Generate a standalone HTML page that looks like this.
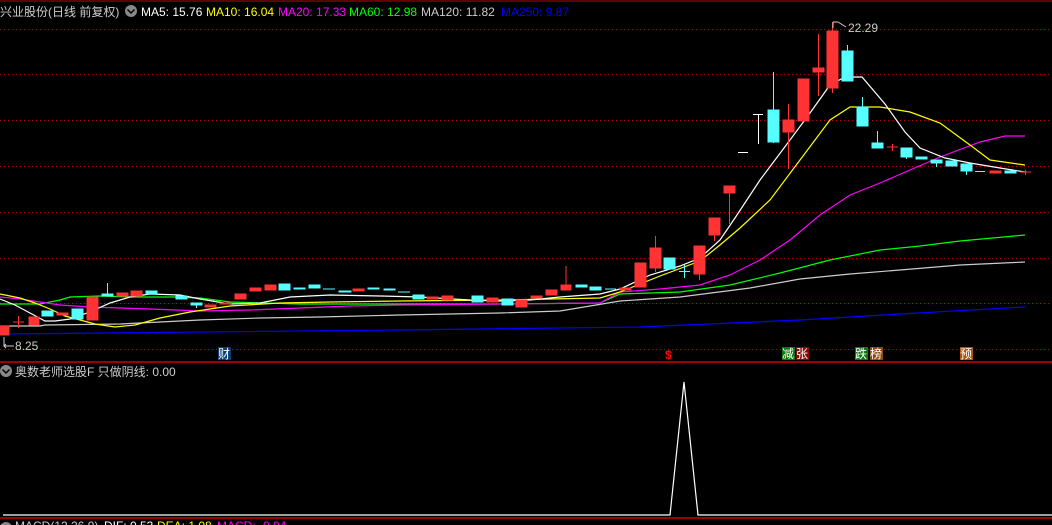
<!DOCTYPE html>
<html><head><meta charset="utf-8"><style>
body{margin:0;background:#000;width:1052px;height:525px;overflow:hidden;font-family:"Liberation Sans","Noto Sans CJK SC",sans-serif}
svg{position:absolute;left:0;top:0}
text{font-family:"Liberation Sans","Noto Sans CJK SC",sans-serif;font-size:12px}
</style></head><body>
<svg width="1052" height="525" viewBox="0 0 1052 525">
<line x1="0" y1="1" x2="1052" y2="1" stroke="#b00" stroke-width="1"/>
<g stroke="#b00" stroke-dasharray="1,3" stroke-width="1">
<line x1="0" y1="29.5" x2="1052" y2="29.5"/><line x1="0" y1="74.5" x2="1052" y2="74.5"/>
<line x1="0" y1="120.5" x2="1052" y2="120.5"/><line x1="0" y1="166.5" x2="1052" y2="166.5"/>
<line x1="0" y1="212.5" x2="1052" y2="212.5"/><line x1="0" y1="258.5" x2="1052" y2="258.5"/>
<line x1="0" y1="303.5" x2="1052" y2="303.5"/><line x1="0" y1="349.5" x2="1052" y2="349.5"/>
</g>
<line x1="0" y1="362" x2="1052" y2="362" stroke="#c00" stroke-width="1.5"/>
<line x1="0" y1="518" x2="1052" y2="518" stroke="#c00" stroke-width="1.5"/>
<g fill="none" stroke-width="1.2">
<polyline stroke="#00f" points="0,334 200,332 400,330 640,327 800,320 900,314 1025,307"/>
<polyline stroke="#ccc" points="0,326 40,326 45,325 120,324 160,322 200,320 260,318 320,317 400,315 500,313 560,311 620,301 680,297 750,288 800,279 850,274 900,270 960,265 1025,262"/>
<polyline stroke="#0f0" points="0,304 40,304 60,300 70,297 100,296 130,297 175,297 200,298 230,302 300,304 400,304 500,304 600,303 620,294 680,292 730,285 780,273 830,260 880,250 920,246 960,241 1025,235"/>
<polyline stroke="#f0f" points="0,297 20,299 40,302 60,305 90,307 150,309 200,311 250,310 300,308 350,306 400,305 500,304 600,303 620,292 660,289 700,285 730,275 760,260 790,240 820,215 850,195 880,183 910,170 940,157 980,142 1005,136 1025,136"/>
<polyline stroke="#ff0" points="0,294 20,298 35,303 50,309 65,316 80,320 95,324 115,327 135,325 160,318 190,312 230,306 280,303 330,302 400,301 500,300 600,298 620,292 660,276 700,261 720,245 740,228 770,200 800,160 830,120 850,107 880,107 910,112 940,123 970,145 990,160 1025,165"/>
<polyline stroke="#fff" points="0,299 15,305 30,313 45,321 55,321 70,319 90,312 110,303 130,297 150,294 180,295 200,299 230,304 260,303 290,297 330,295 380,296 420,297 470,300 500,301 530,300 560,297 600,294 620,289 650,275 680,266 700,258 720,240 735,218 760,180 775,160 790,140 810,113 830,85 845,77 862,77 885,104 905,132 920,148 945,158 970,163 1000,168 1025,172"/>
</g>
<g fill="#ff3333" stroke="#ff3333">
<rect x="0" y="326" width="9" height="9"/><line x1="13" y1="322" x2="24" y2="322"/><line x1="18.5" y1="316" x2="18.5" y2="328"/>
<rect x="29" y="317" width="10" height="8"/><rect x="57" y="313" width="11" height="2"/><rect x="87" y="297" width="11" height="23"/>
<rect x="117" y="293" width="11" height="3"/><rect x="131" y="291" width="11" height="5"/><rect x="205" y="305" width="11" height="2"/>
<rect x="220" y="303" width="11" height="1"/><rect x="235" y="294" width="11" height="5"/><rect x="250" y="288" width="11" height="3"/>
<rect x="265" y="285" width="11" height="5"/><rect x="353" y="289" width="11" height="2"/><rect x="427" y="297" width="11" height="2"/>
<rect x="442" y="296" width="11" height="4"/><rect x="487" y="298" width="11" height="4"/><rect x="516" y="300" width="11" height="7"/>
<rect x="531" y="296" width="11" height="2"/><rect x="546" y="290" width="11" height="5"/><rect x="561" y="285" width="10" height="5"/><line x1="566" y1="266" x2="566" y2="285"/>
<rect x="620" y="288" width="11" height="2"/>
<rect x="635" y="263" width="11" height="24"/><rect x="650" y="248" width="11" height="20"/><line x1="655.5" y1="236" x2="655.5" y2="272"/>
<rect x="694" y="246" width="11" height="28"/><line x1="699.5" y1="274" x2="699.5" y2="280"/>
<rect x="709" y="218" width="11" height="17"/><line x1="714.5" y1="235" x2="714.5" y2="241"/>
<rect x="724" y="186" width="11" height="7"/><line x1="729.5" y1="193" x2="729.5" y2="224"/>
<rect x="783" y="120" width="11" height="12"/><line x1="788.5" y1="104" x2="788.5" y2="169"/>
<rect x="798" y="79" width="11" height="42"/>
<rect x="813" y="68" width="11" height="4"/><line x1="818.5" y1="34" x2="818.5" y2="96"/>
<rect x="827" y="31" width="11" height="57"/><line x1="832.5" y1="22" x2="832.5" y2="93"/>
<line x1="887" y1="147" x2="898" y2="147"/><line x1="892.5" y1="144" x2="892.5" y2="151"/>
<rect x="990" y="171" width="11" height="2"/><line x1="1020" y1="172" x2="1031" y2="172"/><line x1="1025.5" y1="170" x2="1025.5" y2="175"/>
</g>
<g fill="#55ffff" stroke="#55ffff">
<rect x="42" y="311" width="11" height="5"/><rect x="72" y="309" width="11" height="10"/>
<rect x="102" y="294" width="11" height="2"/><line x1="107.5" y1="283" x2="107.5" y2="294"/>
<rect x="146" y="291" width="11" height="3"/><rect x="176" y="296" width="11" height="3"/><rect x="191" y="303" width="11" height="2"/><line x1="196.5" y1="305" x2="196.5" y2="308"/>
<rect x="279" y="284" width="11" height="6"/><rect x="294" y="288" width="11" height="1"/><rect x="309" y="285" width="11" height="3"/>
<line x1="323" y1="289" x2="335" y2="289"/><rect x="339" y="291" width="12" height="1"/><rect x="368" y="288" width="11" height="1"/>
<rect x="384" y="289" width="11" height="1"/><line x1="398" y1="292" x2="410" y2="292"/><rect x="413" y="295" width="11" height="4"/>
<rect x="472" y="296" width="11" height="6"/><rect x="502" y="299" width="11" height="6"/>
<rect x="576" y="285" width="11" height="2"/><rect x="590" y="287" width="11" height="3"/><line x1="605" y1="289" x2="616" y2="289"/>
<rect x="664" y="258" width="11" height="11"/><line x1="679" y1="271.5" x2="690" y2="271.5"/><line x1="684.5" y1="265" x2="684.5" y2="278"/>
<rect x="768" y="110" width="11" height="32"/><line x1="773.5" y1="72" x2="773.5" y2="143"/>
<rect x="842" y="51" width="11" height="30"/><line x1="847.5" y1="45" x2="847.5" y2="51"/>
<rect x="857" y="107" width="11" height="19"/><line x1="862.5" y1="97" x2="862.5" y2="107"/>
<rect x="872" y="143" width="11" height="5"/><line x1="877.5" y1="131" x2="877.5" y2="143"/>
<rect x="901" y="148" width="11" height="9"/><line x1="906.5" y1="157" x2="906.5" y2="159"/>
<rect x="916" y="157" width="11" height="2"/><rect x="931" y="160" width="11" height="3"/><line x1="936.5" y1="163" x2="936.5" y2="167"/>
<rect x="946" y="161" width="11" height="5"/><rect x="961" y="164" width="11" height="7"/><line x1="966.5" y1="171" x2="966.5" y2="175"/>
<line x1="975" y1="171.5" x2="985" y2="171.5"/><rect x="1005" y="171" width="11" height="2"/>
</g>
<g stroke="#fff" stroke-width="1">
<line x1="738" y1="152.5" x2="748" y2="152.5"/><line x1="753" y1="114.5" x2="763" y2="114.5"/><line x1="758.5" y1="114" x2="758.5" y2="144"/>
</g>
<text x="0" y="16" fill="#ccc" font-size="13">兴业股份(日线 前复权)</text>
<circle cx="131" cy="11" r="6" fill="#888"/><path d="M127.5 9.5 L131 13 L134.5 9.5" stroke="#000" stroke-width="1.5" fill="none"/>
<text x="141" y="16" fill="#fff">MA5: 15.76</text>
<text x="206" y="16" fill="#ff0">MA10: 16.04</text>
<text x="278" y="16" fill="#f0f">MA20: 17.33</text>
<text x="349" y="16" fill="#0f0">MA60: 12.98</text>
<text x="421" y="16" fill="#ccc">MA120: 11.82</text>
<text x="501" y="16" fill="#00f">MA250: 9.87</text>
<path d="M833 22 L833 28 M833 22 L838 22 M838 22 L846 27" stroke="#ccc" fill="none"/>
<text x="848" y="32" fill="#ccc">22.29</text>
<path d="M4 337 L4 346 L14 346 M6 344 L4 346 L6 348" stroke="#ccc" fill="none"/>
<text x="15" y="350" fill="#ccc">8.25</text>
<rect x="218" y="347" width="13" height="13" fill="#0a3c78"/><text x="218" y="358" fill="#fff">财</text>
<text x="665" y="359" fill="#f00" font-weight="bold">$</text>
<rect x="782" y="347" width="13" height="13" fill="#0a7a0a"/><text x="782" y="358" fill="#fff">减</text>
<rect x="796" y="347" width="13" height="13" fill="#8a0a0a"/><text x="796" y="358" fill="#fff">张</text>
<rect x="855" y="347" width="13" height="13" fill="#0a7a0a"/><text x="855" y="358" fill="#fff">跌</text>
<rect x="870" y="347" width="13" height="13" fill="#8a4a0a"/><text x="870" y="358" fill="#fff">榜</text>
<rect x="960" y="347" width="13" height="13" fill="#b0500a"/><text x="960" y="358" fill="#fff">预</text>
<circle cx="6" cy="371" r="6" fill="#888"/><path d="M2.5 369.5 L6 373 L9.5 369.5" stroke="#000" stroke-width="1.5" fill="none"/>
<text x="15" y="376" fill="#ccc" font-size="13">奥数老师选股F  只做阴线: 0.00</text>
<polyline points="3,515 670,515 684,382 698,515 1052,515" stroke="#fff" fill="none" stroke-width="1.2"/>
<circle cx="6" cy="528" r="6" fill="#888"/>
<text x="15" y="530" fill="#ccc">MACD(12,26,9)</text><text x="104" y="530" fill="#fff">DIF: 0.53</text>
<text x="157" y="530" fill="#ff0">DEA: 1.08</text><text x="217" y="530" fill="#f0f">MACD: -0.94</text>
</svg>
</body></html>
